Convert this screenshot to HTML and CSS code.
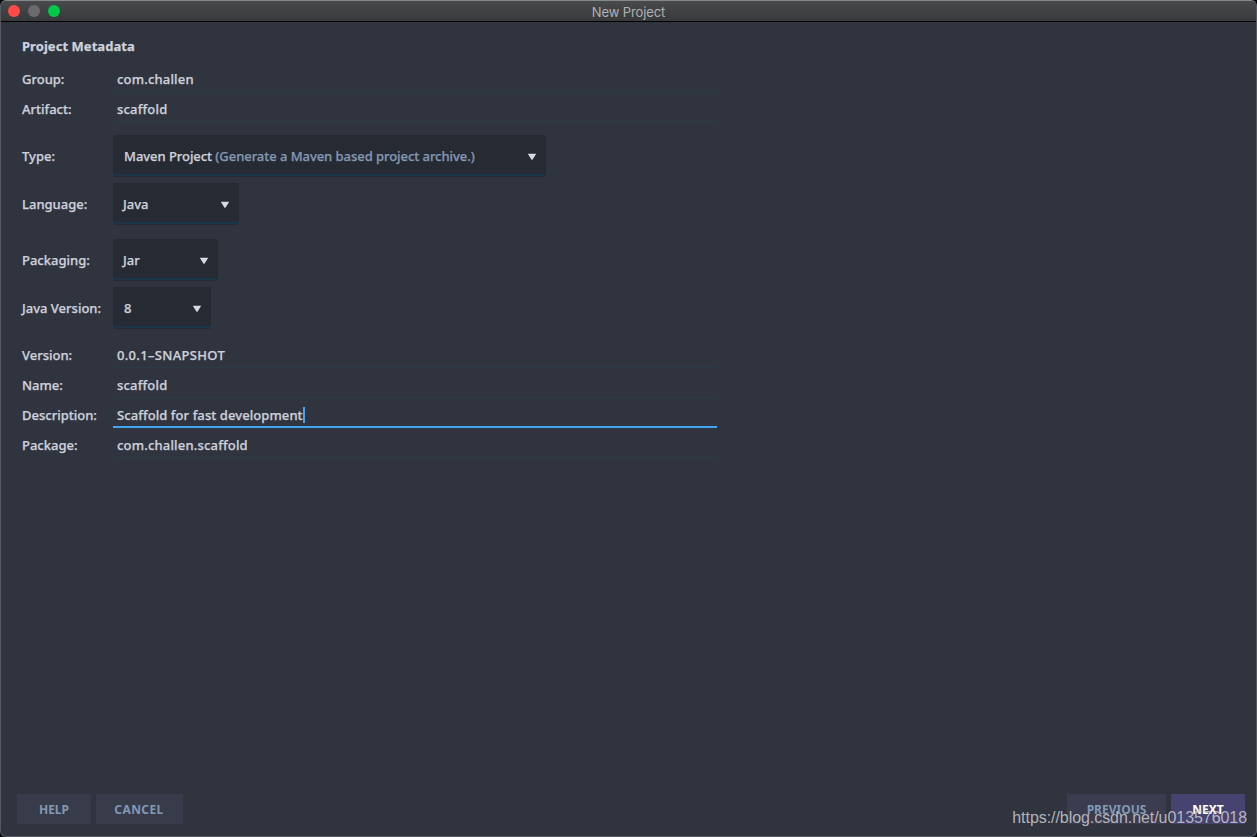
FILE: index.html
```html
<!DOCTYPE html>
<html lang="en">
<head>
  <meta charset="UTF-8">
  <title>New Project</title>
  <link rel="stylesheet" href="styles.css">
</head>
<body>
  <div class="window">
    <header class="titlebar">
      <div class="lights">
        <span class="light close"></span>
        <span class="light minimize"></span>
        <span class="light zoom"></span>
      </div>
      <div class="title">New Project</div>
    </header>

    <main class="content">
      <h1>Project Metadata</h1>

      <div class="row"><label>Group:</label><div class="field"><span>com.challen</span></div></div>
      <div class="row"><label>Artifact:</label><div class="field"><span>scaffold</span></div></div>

      <div class="selects">
        <div class="row">
          <label>Type:</label>
          <div class="select type">
            <span>Maven Project <span class="hint">(Generate a Maven based project archive.)</span></span>
            <svg class="arrow" viewBox="0 0 10 7"><path d="M0.8 0.8h8.4L5.5 6.8h-1z"/></svg>
          </div>
        </div>
        <div class="row">
          <label>Language:</label>
          <div class="select language">
            <span>Java</span>
            <svg class="arrow" viewBox="0 0 10 7"><path d="M0.8 0.8h8.4L5.5 6.8h-1z"/></svg>
          </div>
        </div>
      </div>

      <div class="selects">
        <div class="row">
          <label>Packaging:</label>
          <div class="select packaging">
            <span>Jar</span>
            <svg class="arrow" viewBox="0 0 10 7"><path d="M0.8 0.8h8.4L5.5 6.8h-1z"/></svg>
          </div>
        </div>
        <div class="row">
          <label>Java Version:</label>
          <div class="select java-version">
            <span>8</span>
            <svg class="arrow" viewBox="0 0 10 7"><path d="M0.8 0.8h8.4L5.5 6.8h-1z"/></svg>
          </div>
        </div>
      </div>

      <div class="row"><label>Version:</label><div class="field version"><span>0.0.1–SNAPSHOT</span></div></div>
      <div class="row"><label>Name:</label><div class="field"><span>scaffold</span></div></div>
      <div class="row"><label>Description:</label><div class="field focused"><span>Scaffold for fast development</span><i class="caret"></i></div></div>
      <div class="row"><label>Package:</label><div class="field"><span>com.challen.scaffold</span></div></div>
    </main>

    <footer class="buttons">
      <button class="btn help">HELP</button>
      <button class="btn cancel">CANCEL</button>
      <button class="btn previous">PREVIOUS</button>
      <button class="btn next">NEXT</button>
    </footer>
  </div>
  <div class="watermark">https://blog.csdn.net/u013576018</div>
</body>
</html>
```
FILE: styles.css
```css
* {
  box-sizing: border-box;
}

body {
  margin: 0;
  background: #050608;
  font-family: "Noto Sans", "Open Sans", sans-serif;
  font-size: 13px;
  font-weight: 500;
  color: #ced1dc;
}

.window {
  display: flex;
  flex-direction: column;
  height: 100vh;
  border: 1px solid #555961;
  border-top-color: #85888a;
  border-radius: 6px;
  background: #30343f;
  overflow: hidden;
}

.titlebar {
  position: relative;
  display: flex;
  align-items: center;
  flex: none;
  height: 21px;
  border-bottom: 1px solid #000;
  background: linear-gradient(#484a4c, #38393b);
}

.lights {
  display: flex;
  gap: 8px;
  padding-left: 7px;
}

.light {
  width: 12px;
  height: 12px;
  border-radius: 50%;
}

.close {
  background: #ff4a48;
}

.minimize {
  background: #6b6b6d;
}

.zoom {
  background: #00c94a;
}

.title {
  position: absolute;
  left: 0;
  right: 0;
  padding-top: 1px;
  text-align: center;
  font-family: Inter, sans-serif;
  font-size: 13px;
  font-weight: 400;
  letter-spacing: -0.1px;
  color: #b0b1b2;
}

.content {
  flex: 1;
  padding: 14px 21px 0;
  -webkit-text-stroke: 0.25px;
}

h1 {
  margin: 0 0 8px;
  height: 20px;
  line-height: 20px;
  font-size: 13px;
  font-weight: 700;
  letter-spacing: 0.05px;
}

.row {
  display: flex;
  align-items: center;
  height: 30px;
  white-space: nowrap;
}

label {
  width: 91px;
}

.field {
  display: flex;
  align-items: center;
  width: 604px;
  height: 30px;
  padding: 0 4px;
  letter-spacing: 0.18px;
  background: linear-gradient(#283b49, #283b49) 0 27px / 100% 1px no-repeat;
}

.version {
  letter-spacing: 0.32px;
}

.focused {
  letter-spacing: 0.08px;
  background: linear-gradient(#42a5f5, #42a5f5) 0 26px / 100% 2px no-repeat;
}

.caret {
  width: 2px;
  height: 16px;
  background: #42a5f5;
}

.selects {
  display: flex;
  flex-direction: column;
  gap: 6px;
  padding: 11px 0 3px;
}

.selects + .selects {
  margin-bottom: 8px;
}

.selects .row {
  height: 42px;
}

.select {
  display: flex;
  align-items: center;
  justify-content: space-between;
  height: 42px;
  padding: 0 9px 0 11px;
  border-radius: 2px;
  background: linear-gradient(#1b3448, #1b3448) 0 39px / 100% 2px no-repeat #262a33;
}

.type {
  width: 433px;
  letter-spacing: -0.05px;
}

.language {
  width: 126px;
  padding-left: 10px;
}

.packaging {
  width: 105px;
  padding-left: 10px;
}

.java-version {
  width: 98px;
}

.hint {
  color: #8498b3;
}

.arrow {
  width: 10px;
  height: 7px;
  fill: #d8dae3;
  stroke: none;
}

.buttons {
  display: flex;
  gap: 5px;
  padding: 0 11px 12px 16px;
}

.btn {
  height: 30px;
  padding: 0;
  border: none;
  background: #383b4a;
  font: 700 12px "Noto Sans", sans-serif;
  color: #8199b3;
}

.help {
  width: 74px;
}

.cancel {
  width: 87px;
  padding-right: 1px;
  letter-spacing: 0.4px;
}

.previous {
  width: 99px;
  margin-left: auto;
  background: #3b3c50;
}

.next {
  width: 74px;
  background: #464370;
  color: #fff;
}

.watermark {
  position: absolute;
  right: 10px;
  bottom: 10px;
  font: 16px/18px "Liberation Sans", Arial, sans-serif;
  letter-spacing: -0.06px;
  color: rgba(205, 205, 205, 0.85);
}
```
